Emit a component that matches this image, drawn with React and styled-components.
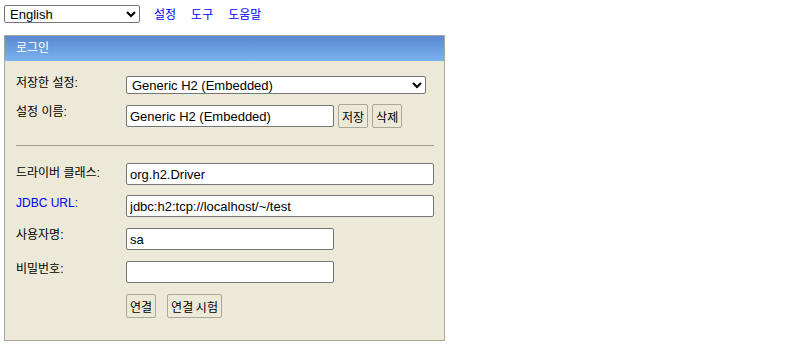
import styled, { createGlobalStyle } from "styled-components";

const GlobalStyle = createGlobalStyle`
  body {
    margin: 0;
    background: #fff;
    font-family: "Liberation Sans", Arial, "Noto Sans CJK KR", sans-serif;
    font-size: 13px;
    color: #000;
  }
`;

const Page = styled.div`
  padding: 5px 4px;
`;

const TopBar = styled.div`
  display: flex;
  align-items: center;
  gap: 15px;
  height: 18px;
`;

const LangSelect = styled.select`
  width: 136px;
  height: 18px;
  font: 13px "Liberation Sans", Arial, sans-serif;
  border: 1px solid #767676;
  border-radius: 2px;
  padding: 0 0 0 1px;
  background: #fff;
  margin-right: -1px;
`;

const NavLink = styled.a`
  color: #0000ff;
  text-decoration: none;
  font-family: "Noto Sans CJK KR", sans-serif;
  font-size: 12px;
  line-height: 16px;
`;

const Panel = styled.div`
  margin-top: 12px;
  width: 439px;
  border: 1px solid #aca899;
  background: #ece9d8;
`;

const PanelHeader = styled.div`
  height: 25px;
  background: linear-gradient(to bottom, #5a87d0, #7bb3f0);
  color: #fff;
  font-family: "Noto Sans CJK KR", sans-serif;
  font-size: 12px;
  line-height: 22px;
  padding-left: 11px;
`;

const PanelBody = styled.div`
  padding: 15px 10px 22px 11px;
`;

const Row = styled.div`
  display: grid;
  grid-template-columns: 110px 1fr;
  align-items: start;
  margin-top: ${(p) => p.$top || 0}px;
`;

const Label = styled.div`
  font-family: "Liberation Sans", Arial, "Noto Sans CJK KR", sans-serif;
  font-size: 12px;
  line-height: 15px;
  padding-top: ${(p) => p.$pad ?? 1}px;
  color: ${(p) => (p.$link ? "#0000ff" : "#000")};
`;

const Field = styled.div`
  display: flex;
  align-items: center;
  gap: 4px;
`;

const Select = styled.select`
  width: 300px;
  height: 18px;
  font: 13px "Liberation Sans", Arial, sans-serif;
  border: 1px solid #767676;
  border-radius: 2px;
  background: #fff;
  padding: 0 0 0 1px;
`;

const Input = styled.input`
  box-sizing: border-box;
  width: ${(p) => p.$w}px;
  height: 22px;
  font: 13px "Liberation Sans", Arial, sans-serif;
  border: 1px solid #767676;
  border-radius: 2px;
  padding: 0 3px;
  background: #fff;
  color: #000;
`;

const Button = styled.button`
  box-sizing: border-box;
  height: 24px;
  padding: 0 3px;
  border: 1px solid #aca899;
  border-radius: 2px;
  background: #ece9d8;
  font-family: "Noto Sans CJK KR", sans-serif;
  font-size: 12px;
  color: #000;
  margin-right: ${(p) => p.$gap || 0}px;
`;

const Divider = styled.hr`
  margin: 17px 0 17px 0;
  border: none;
  border-top: 1px solid #a09d92;
  height: 0;
`;

export default function App() {
  return (
    <>
      <GlobalStyle />
      <Page>
        <TopBar>
          <LangSelect defaultValue="en">
            <option value="en">English</option>
          </LangSelect>
          <NavLink href="#">설정</NavLink>
          <NavLink href="#">도구</NavLink>
          <NavLink href="#">도움말</NavLink>
        </TopBar>
        <Panel>
          <PanelHeader>로그인</PanelHeader>
          <PanelBody>
            <Row>
              <Label $pad={0}>저장한 설정:</Label>
              <Field>
                <Select defaultValue="h2">
                  <option value="h2">Generic H2 (Embedded)</option>
                </Select>
              </Field>
            </Row>
            <Row $top={10}>
              <Label $pad={1}>설정 이름:</Label>
              <Field>
                <Input $w={208} defaultValue="Generic H2 (Embedded)" />
                <Button>저장</Button>
                <Button>삭제</Button>
              </Field>
            </Row>
            <Divider />
            <Row>
              <Label $pad={3}>드라이버 클래스:</Label>
              <Input $w={308} defaultValue="org.h2.Driver" />
            </Row>
            <Row $top={10}>
              <Label $pad={1} $link>
                JDBC URL:
              </Label>
              <Input $w={308} defaultValue="jdbc:h2:tcp://localhost/~/test" />
            </Row>
            <Row $top={11}>
              <Label $pad={0}>사용자명:</Label>
              <Input $w={208} defaultValue="sa" />
            </Row>
            <Row $top={11}>
              <Label $pad={1}>비밀번호:</Label>
              <Input $w={208} type="password" defaultValue="" />
            </Row>
            <Row $top={11}>
              <span />
              <Field>
                <Button $gap={7}>연결</Button>
                <Button>연결 시험</Button>
              </Field>
            </Row>
          </PanelBody>
        </Panel>
      </Page>
    </>
  );
}
